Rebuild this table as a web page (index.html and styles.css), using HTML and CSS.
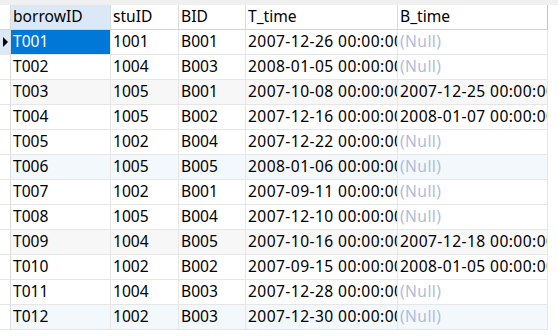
FILE: index.html
```html
<!DOCTYPE html>
<html>
<head>
<meta charset="utf-8">
<link rel="stylesheet" href="styles.css">
</head>
<body>
<div class="strip"></div>
<div class="grid">
  <div class="row head">
    <div class="c ind"></div>
    <div class="c sel-col">borrowID</div>
    <div class="c">stuID</div>
    <div class="c">BID</div>
    <div class="c">T_time</div>
    <div class="c last">B_time</div>
  </div>
  <div class="row">
    <div class="c ind cur"><span class="arrow"></span></div>
    <div class="c selected">T001</div>
    <div class="c">1001</div>
    <div class="c">B001</div>
    <div class="c">2007-12-26 00:00:00</div>
    <div class="c null">(Null)</div>
  </div>
  <div class="row">
    <div class="c ind"></div>
    <div class="c">T002</div>
    <div class="c">1004</div>
    <div class="c">B003</div>
    <div class="c">2008-01-05 00:00:00</div>
    <div class="c null">(Null)</div>
  </div>
  <div class="row gray">
    <div class="c ind"></div>
    <div class="c">T003</div>
    <div class="c">1005</div>
    <div class="c">B001</div>
    <div class="c">2007-10-08 00:00:00</div>
    <div class="c">2007-12-25 00:00:00</div>
  </div>
  <div class="row">
    <div class="c ind"></div>
    <div class="c">T004</div>
    <div class="c">1005</div>
    <div class="c">B002</div>
    <div class="c">2007-12-16 00:00:00</div>
    <div class="c">2008-01-07 00:00:00</div>
  </div>
  <div class="row">
    <div class="c ind"></div>
    <div class="c">T005</div>
    <div class="c">1002</div>
    <div class="c">B004</div>
    <div class="c">2007-12-22 00:00:00</div>
    <div class="c null">(Null)</div>
  </div>
  <div class="row blue">
    <div class="c ind"></div>
    <div class="c">T006</div>
    <div class="c">1005</div>
    <div class="c">B005</div>
    <div class="c">2008-01-06 00:00:00</div>
    <div class="c null">(Null)</div>
  </div>
  <div class="row">
    <div class="c ind"></div>
    <div class="c">T007</div>
    <div class="c">1002</div>
    <div class="c">B001</div>
    <div class="c">2007-09-11 00:00:00</div>
    <div class="c null">(Null)</div>
  </div>
  <div class="row">
    <div class="c ind"></div>
    <div class="c">T008</div>
    <div class="c">1005</div>
    <div class="c">B004</div>
    <div class="c">2007-12-10 00:00:00</div>
    <div class="c null">(Null)</div>
  </div>
  <div class="row gray">
    <div class="c ind"></div>
    <div class="c">T009</div>
    <div class="c">1004</div>
    <div class="c">B005</div>
    <div class="c">2007-10-16 00:00:00</div>
    <div class="c">2007-12-18 00:00:00</div>
  </div>
  <div class="row">
    <div class="c ind"></div>
    <div class="c">T010</div>
    <div class="c">1002</div>
    <div class="c">B002</div>
    <div class="c">2007-09-15 00:00:00</div>
    <div class="c">2008-01-05 00:00:00</div>
  </div>
  <div class="row">
    <div class="c ind"></div>
    <div class="c">T011</div>
    <div class="c">1004</div>
    <div class="c">B003</div>
    <div class="c">2007-12-28 00:00:00</div>
    <div class="c null">(Null)</div>
  </div>
  <div class="row blue">
    <div class="c ind"></div>
    <div class="c">T012</div>
    <div class="c">1002</div>
    <div class="c">B003</div>
    <div class="c">2007-12-30 00:00:00</div>
    <div class="c null">(Null)</div>
  </div>
</div>
</body>
</html>
```

FILE: styles.css
```css
html, body {
  margin: 0;
  padding: 0;
  background: #ffffff;
}
body {
  width: 558px;
  height: 336px;
  overflow: hidden;
  font-family: "Noto Sans", "Open Sans", sans-serif;
  font-size: 15.6px;
  color: #000;
}
.strip {
  height: 5px;
  background: #f0f0f0;
}
.grid {
  width: 548px;
}
.row {
  display: grid;
  grid-template-columns: 11px 100px 68px 67px 152px 150px;
  height: 25px;
}
.c {
  box-sizing: border-box;
  height: 25px;
  border-right: 1px solid #e6e6e6;
  border-bottom: 1px solid #e6e6e6;
  padding: 0 0 0 2px;
  line-height: 23px;
  white-space: nowrap;
  overflow: hidden;
}
.row:not(.head) .c:nth-child(5),
.row:not(.head) .c:nth-child(6) {
  letter-spacing: 0.42px;
}
.head .c {
  border-right-color: #dcdcdc;
  border-bottom-color: #d4d4d4;
  background: #fff;
}
.head .c.last {
  border-right-color: #c4c4c4;
}
.head .c.sel-col {
  background: #dae8f7;
}
.ind {
  padding: 0;
  border-right-color: #dcdcdc;
  position: relative;
}
.ind.cur {
  background: #dae8f7;
}
.arrow {
  position: absolute;
  left: 3px;
  top: 7px;
  width: 0;
  height: 0;
  border-top: 5px solid transparent;
  border-bottom: 5px solid transparent;
  border-left: 5px solid #000;
}
.gray .c:not(.ind) {
  background: #f7f7f7;
}
.blue .c:not(.ind) {
  background: #f3f8fd;
}
.selected {
  background: #0078d7;
  color: #fff;
}
.null {
  color: #afbdd6;
}
```
